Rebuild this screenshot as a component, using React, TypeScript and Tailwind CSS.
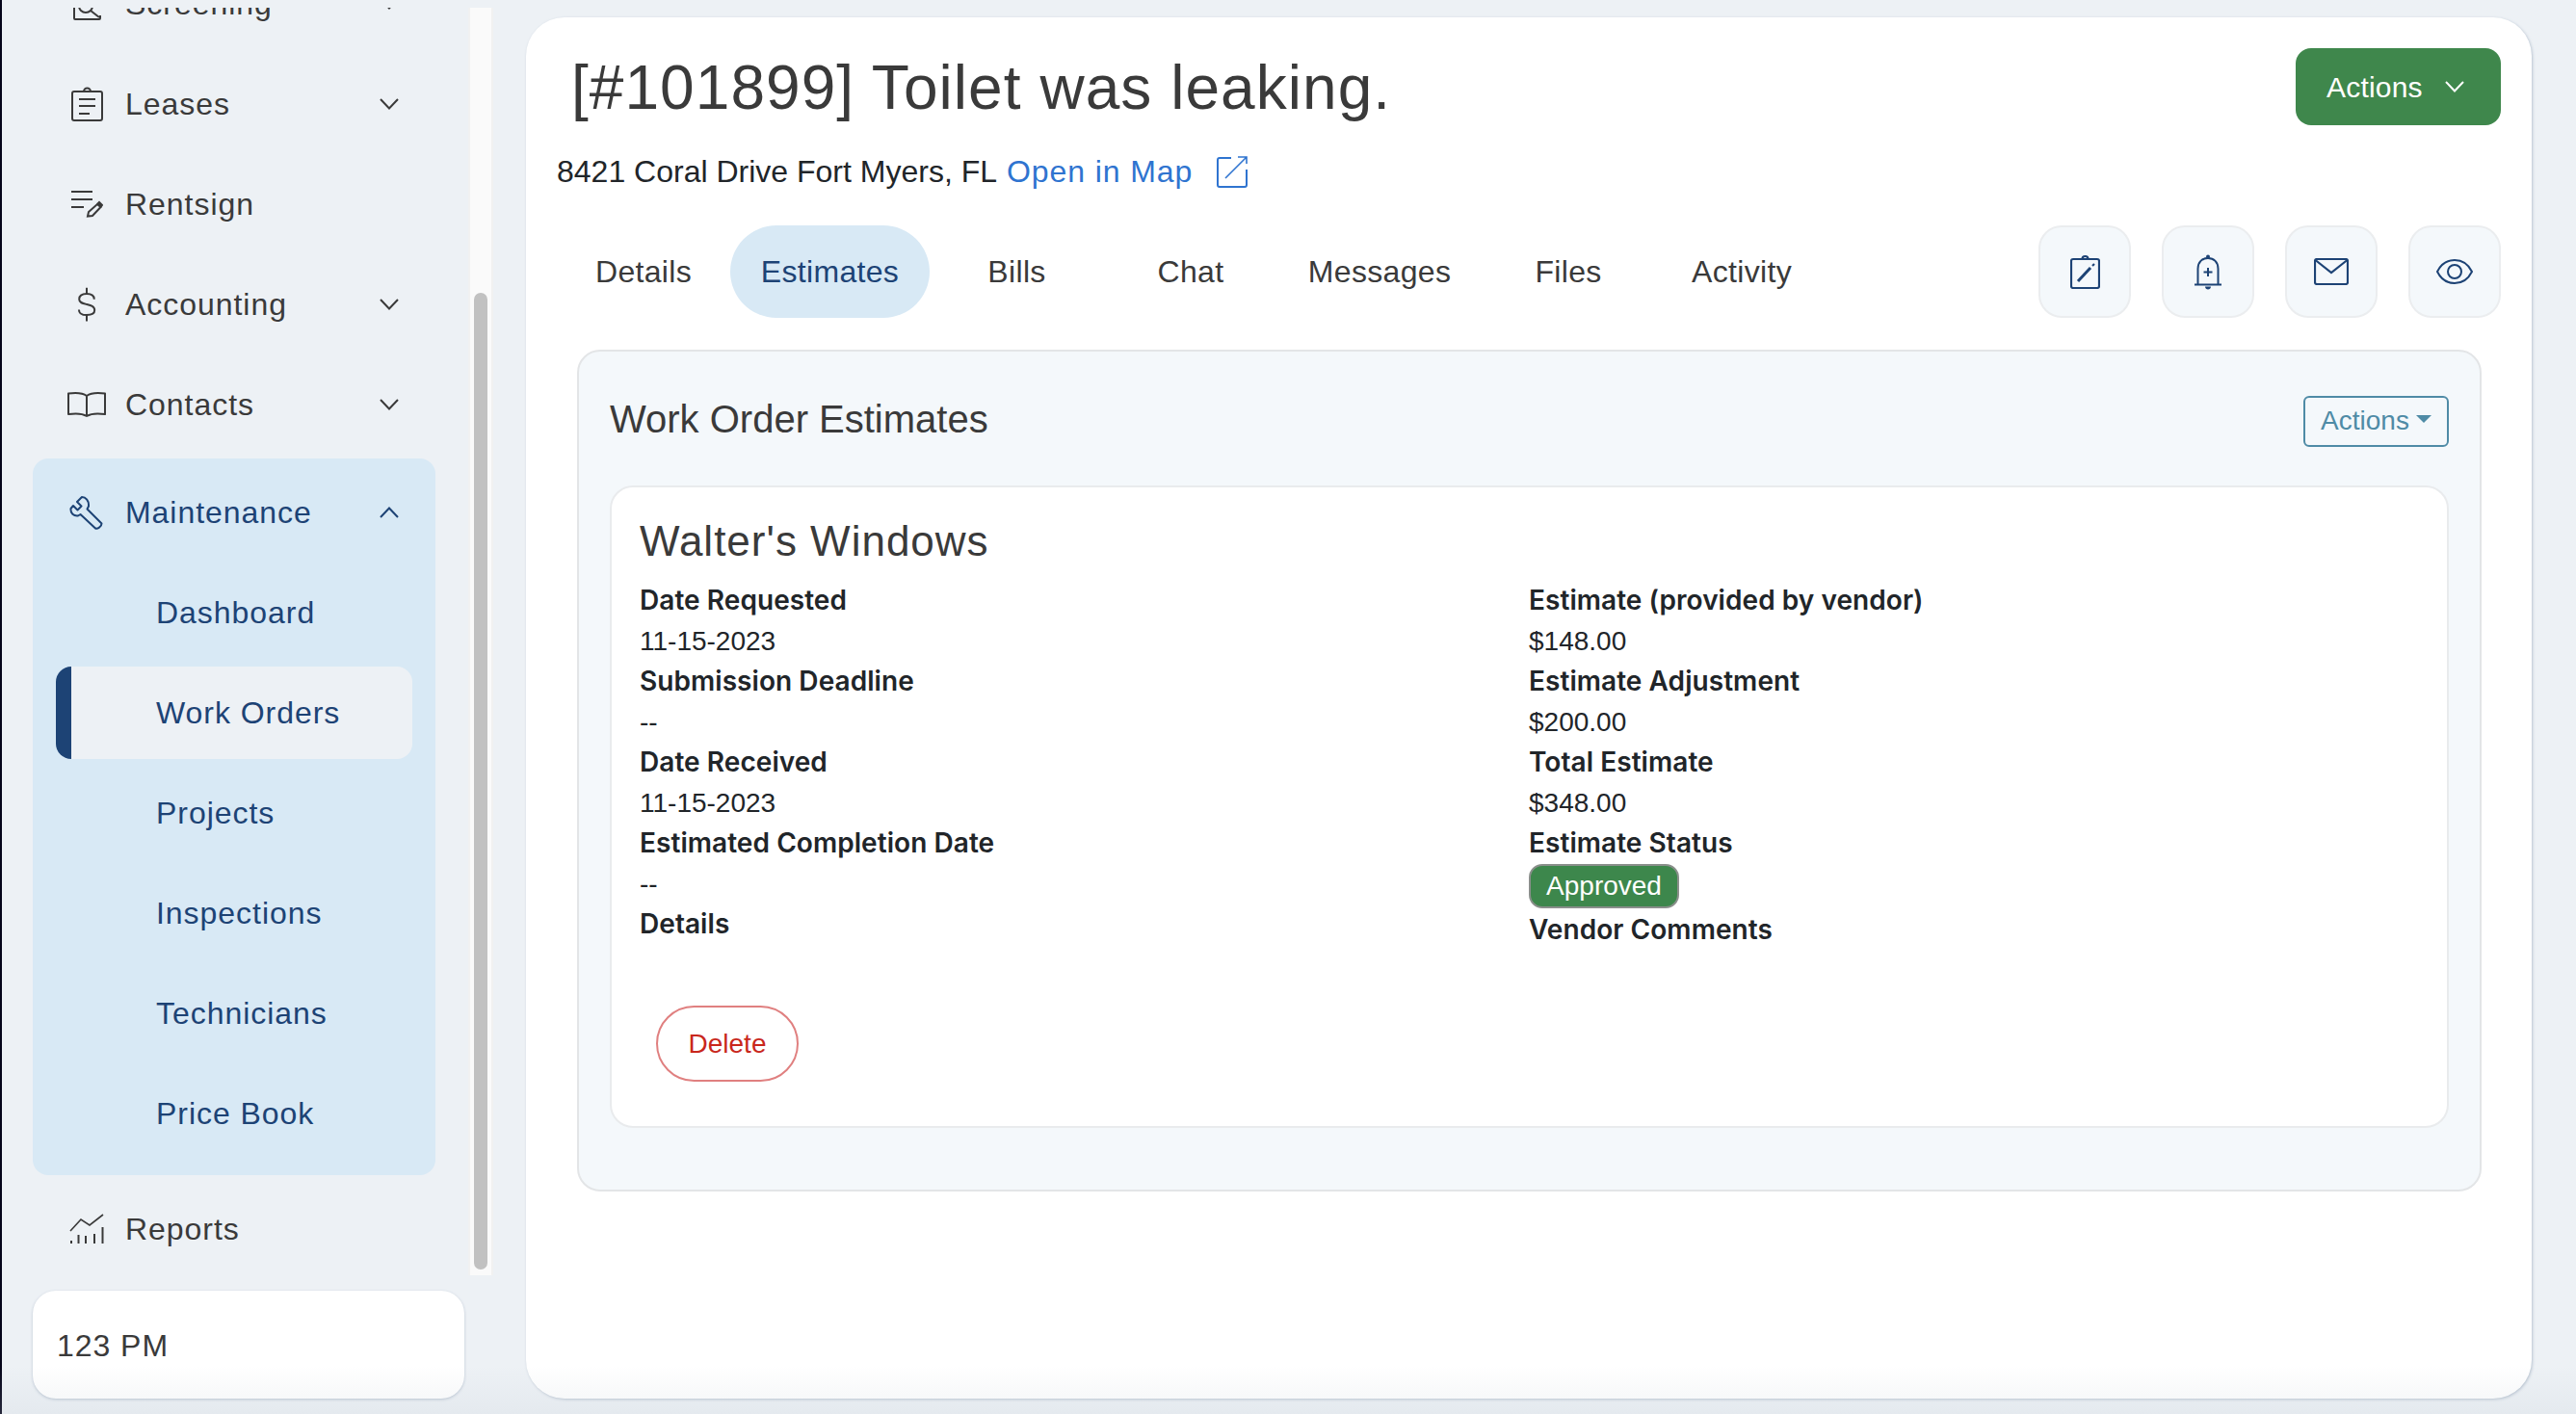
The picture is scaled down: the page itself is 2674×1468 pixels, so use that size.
import React from "react";

function Chevron({ up = false, className = "" }: { up?: boolean; className?: string }) {
  return (
    <svg width="20" height="12" viewBox="0 0 20 12" fill="none" stroke="currentColor" strokeWidth="2" className={className}>
      <path d={up ? "M1 11 10 1.5 19 11" : "M1 1 10 10.5 19 1"} />
    </svg>
  );
}

function ScreeningIcon() {
  return (
    <svg width="30" height="36" viewBox="0 0 30 36" fill="none" stroke="currentColor" strokeWidth="2">
      <path d="M2 12V33a1 1 0 0 0 1 1H28a1 1 0 0 0 1-1V30" />
      <circle cx="14" cy="20" r="7" />
      <path d="M19 25 28 32" />
    </svg>
  );
}

function LeasesIcon() {
  return (
    <svg width="33" height="36" viewBox="0 0 33 36" fill="none" stroke="currentColor" strokeWidth="2">
      <rect x="1" y="5" width="31" height="30" rx="2" />
      <path d="M13 5a3.5 3.5 0 0 1 7 0" />
      <path d="M8 13H25M8 20H25M8 28H19" />
    </svg>
  );
}

function RentsignIcon() {
  return (
    <svg width="34" height="30" viewBox="0 0 34 30" fill="none" stroke="currentColor" strokeWidth="2">
      <path d="M1 2H23M1 10H23M1 18H14" />
      <path d="M18 27.5 19 23 28 15 31.5 18 23 27Z" />
      <path d="M28 15 30 13 33 16 31.5 18" fill="currentColor" />
    </svg>
  );
}

function DollarIcon() {
  return (
    <svg width="34" height="36" viewBox="0 0 24 25.4" fill="none" stroke="currentColor" strokeWidth="1.4">
      <path d="M12 0.5V5M12 20.5V25" />
      <path d="M17.5 9C17.5 6 15.5 5 12 5C8.5 5 6.5 6.5 6.5 9C6.5 11.5 9 12 12 12.7C15 13.4 17.8 14 17.8 17C17.8 19.5 15.5 20.5 12 20.5C8.5 20.5 6.3 19.5 6.3 16.5" />
    </svg>
  );
}

function BookIcon() {
  return (
    <svg width="40" height="28" viewBox="0 0 40 28" fill="none" stroke="currentColor" strokeWidth="2">
      <path d="M20 5C16 2 8 1.5 1 2.5V24C8 23 16 23.5 20 26C24 23.5 32 23 39 24V2.5C32 1.5 24 2 20 5V26" strokeLinejoin="round" />
    </svg>
  );
}

function WrenchIcon() {
  return (
    <svg width="36" height="36" viewBox="0 0 36 36" fill="none" stroke="currentColor" strokeWidth="2" strokeLinejoin="round">
      <path d="M13 2 8 7 12.5 11.5 8.5 15.5 4 11 1.5 14C1 19 4.5 22 9 21.5L11.5 20 27 34.5C29 35.5 33.5 33 33.5 29.5L18.5 14.5 20 11.5C20.5 6 17 2 13 2Z" />
    </svg>
  );
}

function ReportsIcon() {
  return (
    <svg width="36" height="32" viewBox="0 0 36 32" fill="none" stroke="currentColor" strokeWidth="2">
      <path d="M1 18 12 6 21 12 35 1" strokeWidth="1.6" />
      <path d="M2 28V31M9.5 22V31M17 23V31M26 21V31M34.5 14V31" />
    </svg>
  );
}

function ClipboardEditIcon() {
  return (
    <svg width="31" height="36" viewBox="0 0 31 36" fill="none" stroke="currentColor" strokeWidth="2.2">
      <rect x="1" y="5" width="29" height="30" rx="2" />
      <path d="M12.5 5a3 3 0 0 1 6 0" />
      <path d="M8 28 21 14" strokeWidth="3" />
      <path d="M23 12 25 10" />
    </svg>
  );
}

function BellPlusIcon() {
  return (
    <svg width="28" height="37" viewBox="0 0 28 37" fill="none" stroke="currentColor" strokeWidth="2">
      <path d="M3.5 31V15C3.5 8 8 4 14 4C20 4 24.5 8 24.5 15V31" />
      <path d="M0 31.5H28" />
      <path d="M14 14V23M9.5 18.5H18.5" />
      <circle cx="14" cy="2.5" r="2" fill="currentColor" stroke="none" />
      <path d="M11 33.5H17C17 37.5 11 37.5 11 33.5Z" fill="currentColor" stroke="none" />
    </svg>
  );
}

function MailIcon() {
  return (
    <svg width="36" height="28" viewBox="0 0 36 28" fill="none" stroke="currentColor" strokeWidth="2.2">
      <rect x="1" y="1" width="34" height="26" rx="2" />
      <path d="M1.5 2 18 15 34.5 2" />
    </svg>
  );
}

function EyeIcon() {
  return (
    <svg width="38" height="26" viewBox="0 0 38 26" fill="none" stroke="currentColor" strokeWidth="2">
      <path d="M1 13C5 5 11 1 19 1C27 1 33 5 37 13C33 21 27 25 19 25C11 25 5 21 1 13Z" />
      <circle cx="19" cy="13" r="7" />
    </svg>
  );
}

function ExternalIcon() {
  return (
    <svg width="32" height="33" viewBox="0 0 32 33" fill="none" stroke="currentColor" strokeWidth="2">
      <path d="M15 2H3A2 2 0 0 0 1 4V30A2 2 0 0 0 3 32H29A2 2 0 0 0 31 30V14" />
      <path d="M9 23 31 1M22 1H31V8" strokeWidth="1.6" />
    </svg>
  );
}

function NavItem({ icon, label, chevron = false }: { icon: React.ReactNode; label: string; chevron?: boolean }) {
  return (
    <div className="flex h-[104px] items-center pl-[30px] text-[#3a3a3a]">
      <div className="flex w-[66px] shrink-0 items-center justify-center pr-[14px]">{icon}</div>
      <span className="flex-1 text-[32px] tracking-[0.96px]">{label}</span>
      {chevron && <Chevron className="mr-[38px]" />}
    </div>
  );
}

function SubItem({ label, active = false }: { label: string; active?: boolean }) {
  if (active) {
    return (
      <div className="mx-[24px] my-[4px] flex h-[96px] items-center rounded-[16px] border-l-[16px] border-[#1d4375] bg-[#edf1f5] pl-[88px] text-[32px] tracking-[0.96px] text-[#1d4375]">
        {label}
      </div>
    );
  }
  return <div className="flex h-[104px] items-center pl-[128px] text-[32px] tracking-[0.96px] text-[#1d4375]">{label}</div>;
}

function Field({ label, value }: { label: string; value?: React.ReactNode }) {
  return (
    <>
      <div className="h-[42px] font-['Inter',sans-serif] text-[28px] leading-[42px] font-semibold tracking-[0.06px] text-[#212529]">{label}</div>
      {value !== undefined && <div className="h-[42px] pt-[1px] text-[28px] leading-[42px] text-[#212529]">{value}</div>}
    </>
  );
}

function IconButton({ children }: { children: React.ReactNode }) {
  return (
    <button className="flex h-[96px] w-[96px] items-center justify-center rounded-[24px] border-2 border-[#ebedef] bg-[#f4f8fb] text-[#1d4375]">
      {children}
    </button>
  );
}

const tabs = [
  { label: "Details", width: "w-[164px]" },
  { label: "Estimates", width: "w-[207px]", active: true },
  { label: "Bills", width: "w-[165px]" },
  { label: "Chat", width: "w-[180px]" },
  { label: "Messages", width: "w-[196px]" },
  { label: "Files", width: "w-[180px]" },
  { label: "Activity", width: "w-[164px]" },
];

export default function App() {
  return (
    <div className="relative flex h-[1468px] w-[2674px] overflow-hidden bg-[#edf1f5] font-['Liberation_Sans',sans-serif] text-[#3a3a3a]">
      <div className="w-[2px] shrink-0 bg-[#05051a]" />

      {/* sidebar */}
      <div className="flex w-[544px] shrink-0 flex-col pt-[8px] pb-[16px]">
        <div className="flex h-[1316px] shrink-0">
          <div className="h-full w-[484px] shrink-0 overflow-hidden pr-[34px] pl-[32px]">
            <div className="-mt-[56px]">
              <NavItem icon={<ScreeningIcon />} label="Screening" chevron />
              <NavItem icon={<LeasesIcon />} label="Leases" chevron />
              <NavItem icon={<RentsignIcon />} label="Rentsign" />
              <NavItem icon={<DollarIcon />} label="Accounting" chevron />
              <NavItem icon={<BookIcon />} label="Contacts" chevron />
              <div className="mt-[4px] rounded-[16px] bg-[#d8e9f5] pb-[12px] text-[#1d4375]">
                <div className="flex h-[108px] items-center pt-[4px] pl-[30px]">
                  <div className="flex w-[66px] shrink-0 items-center justify-center pr-[14px]">
                    <WrenchIcon />
                  </div>
                  <span className="flex-1 text-[32px] tracking-[0.96px]">Maintenance</span>
                  <Chevron up className="mr-[38px]" />
                </div>
                <SubItem label="Dashboard" />
                <SubItem label="Work Orders" active />
                <SubItem label="Projects" />
                <SubItem label="Inspections" />
                <SubItem label="Technicians" />
                <SubItem label="Price Book" />
              </div>
              <div className="mt-[4px]">
                <NavItem icon={<ReportsIcon />} label="Reports" />
              </div>
            </div>
          </div>
          {/* scrollbar */}
          <div className="w-[26px] shrink-0 border-x-2 border-[#f1f1f1] bg-[#fafafa] px-[4px] pt-[296px]">
            <div className="h-[1014px] rounded-full bg-[#c1c1c1]" />
          </div>
        </div>
        <div className="mt-[16px] ml-[32px] flex h-[112px] w-[448px] items-center rounded-[24px] bg-white pt-[2px] pl-[25px] text-[32px] tracking-[0.96px] shadow-[0_1px_3px_rgba(120,140,165,0.45)]">
          123 PM
        </div>
      </div>

      {/* main card */}
      <div className="mt-[18px] h-[1434px] w-[2082px] shrink-0 rounded-[40px] bg-white shadow-[1px_1px_3px_rgba(120,140,165,0.45)]">
        <div className="mt-[32px] flex h-[80px] items-center justify-between pr-[32px] pl-[47px]">
          <h1 className="pt-[1px] text-[64px] leading-none tracking-[1.05px] text-[#3a3a3a]">[#101899] Toilet was leaking.</h1>
          <button className="flex h-[80px] w-[213px] items-center rounded-[16px] bg-[#3f874c] pl-[32px] text-[30px] tracking-[0.2px] text-white">
            Actions
            <Chevron className="ml-[23px]" />
          </button>
        </div>

        <div className="mt-[28px] ml-[32px] flex h-[40px] items-center text-[32px] text-[#212529]">
          <span>8421 Coral Drive Fort Myers, FL</span>
          <a className="ml-[10px] tracking-[0.9px] text-[#2f74d0]">Open in Map</a>
          <span className="ml-[25px] text-[#2f74d0]">
            <ExternalIcon />
          </span>
        </div>

        <div className="mt-[36px] flex items-center pr-[32px] pl-[40px]">
          <div className="flex flex-1 gap-[8px]">
            {tabs.map((t) => (
              <div
                key={t.label}
                className={
                  t.active
                    ? t.width + " flex h-[96px] items-center justify-center rounded-[48px] bg-[#d8e9f5] text-[32px] tracking-[0.32px] text-[#1d4375]"
                    : t.width + " flex h-[96px] items-center justify-center text-[32px] tracking-[0.32px] text-[#3a3a3a]"
                }
              >
                {t.label}
              </div>
            ))}
          </div>
          <div className="flex gap-[32px]">
            <IconButton>
              <ClipboardEditIcon />
            </IconButton>
            <IconButton>
              <BellPlusIcon />
            </IconButton>
            <IconButton>
              <MailIcon />
            </IconButton>
            <IconButton>
              <EyeIcon />
            </IconButton>
          </div>
        </div>

        {/* estimates panel */}
        <div className="mt-[33px] ml-[53px] h-[874px] w-[1977px] rounded-[24px] border-2 border-[#e3e5e7] bg-[#f4f8fb] px-[32px]">
          <div className="flex h-[139px] items-center justify-between">
            <h2 className="text-[40px] leading-none text-[#3a3a3a]">Work Order Estimates</h2>
            <button className="mt-[5px] flex h-[53px] w-[151px] items-center justify-center rounded-[6px] border-2 border-[#4f8ba6] text-[28px] text-[#4f8ba6]">
              Actions
              <span className="mt-[-4px] ml-[7px] h-0 w-0 border-x-[8px] border-t-[8px] border-x-transparent border-t-[#4f8ba6]" />
            </button>
          </div>

          <div className="h-[667px] rounded-[24px] border-2 border-[#e9ebed] bg-white pt-[28px] pl-[29px]">
            <h3 className="h-[56px] text-[44px] leading-[56px] tracking-[1px] text-[#3a3a3a]">Walter's Windows</h3>
            <div className="mt-[12px] flex">
              <div className="w-[923px] shrink-0">
                <Field label="Date Requested" value="11-15-2023" />
                <Field label="Submission Deadline" value="--" />
                <Field label="Date Received" value="11-15-2023" />
                <Field label="Estimated Completion Date" value="--" />
                <Field label="Details" />
              </div>
              <div className="flex-1">
                <Field label="Estimate (provided by vendor)" value="$148.00" />
                <Field label="Estimate Adjustment" value="$200.00" />
                <Field label="Total Estimate" value="$348.00" />
                <Field label="Estimate Status" />
                <div className="mt-[1px] mb-[1px] flex h-[46px] w-[156px] items-center justify-center rounded-[14px] border-2 border-[#8a8f8b] bg-[#3d874c] text-[28px] text-white">
                  Approved
                </div>
                <Field label="Vendor Comments" />
              </div>
            </div>
            <button className="mt-[58px] ml-[17px] flex h-[79px] w-[148px] items-center justify-center rounded-[40px] border-2 border-[#e08080] text-[28px] text-[#c9271c]">
              Delete
            </button>
          </div>
        </div>
      </div>

      {/* soft fade along the bottom of the window */}
      <div className="pointer-events-none absolute inset-x-0 bottom-0 h-[50px] bg-gradient-to-b from-transparent to-[rgba(190,200,210,0.18)]" />
    </div>
  );
}
